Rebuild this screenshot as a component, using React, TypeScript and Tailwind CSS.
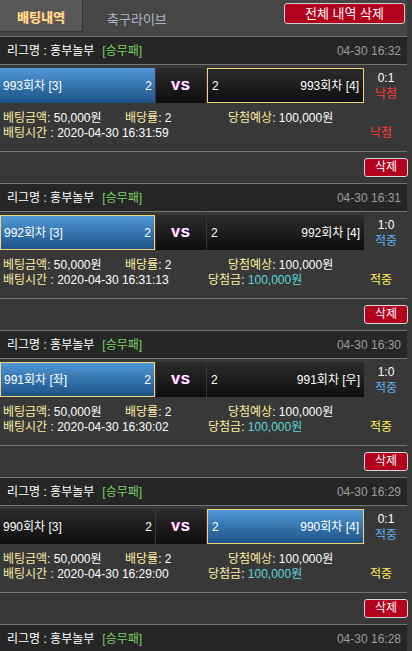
const bets = [
  {
    home: "993회차 [3]",
    away: "993회차 [4]",
    homeBlue: true,
    pick: "away",
    score: "0:1",
    win: false,
    time: "04-30 16:32",
    betTime: "2020-04-30 16:31:59",
  },
  {
    home: "992회차 [3]",
    away: "992회차 [4]",
    homeBlue: true,
    pick: "home",
    score: "1:0",
    win: true,
    time: "04-30 16:31",
    betTime: "2020-04-30 16:31:13",
  },
  {
    home: "991회차 [좌]",
    away: "991회차 [우]",
    homeBlue: true,
    pick: "home",
    score: "1:0",
    win: true,
    time: "04-30 16:30",
    betTime: "2020-04-30 16:30:02",
  },
  {
    home: "990회차 [3]",
    away: "990회차 [4]",
    homeBlue: false,
    pick: "away",
    score: "0:1",
    win: true,
    time: "04-30 16:29",
    betTime: "2020-04-30 16:29:00",
  },
];

const blueBox = "bg-gradient-to-b from-[#5098d8] to-[#1c5386]";
const darkBox = "bg-gradient-to-b from-[#2c2c2c] to-[#0e0e0e]";

type Bet = (typeof bets)[number];

const LeagueRow = ({ time }: { time: string }) => (
  <div className="flex h-[28px] items-center justify-between border-t border-[#747474] bg-[#262626] pl-[7px] pr-[6px]">
    <div className="flex items-center">
      <span className="text-white">리그명 : 홍부놀부</span>
      <span className="ml-[8px] text-[#79d066]">[승무패]</span>
    </div>
    <span className="text-[#9c9c9c]">{time}</span>
  </div>
);

const BetCard = ({ bet }: { bet: Bet }) => {
  const leftSel = bet.pick === "home";
  const rightSel = bet.pick === "away";
  return (
    <div>
      <LeagueRow time={bet.time} />
      <div className="border-t border-[#747474] pt-[3px]">
        <div className="flex h-[35px] gap-px">
          <div
            className={`flex w-[155px] items-center justify-between pl-[3px] pr-[3px] text-white ${
              bet.homeBlue ? blueBox : darkBox
            } ${leftSel ? "border border-[#f3d27c]" : ""}`}
          >
            <span>{bet.home}</span>
            <span>2</span>
          </div>
          <div className={`flex w-[50px] items-center justify-center ${darkBox}`}>
            <span className="text-[13px] font-black tracking-[1px] text-white [font-family:'Liberation_Sans',sans-serif] [text-shadow:-1px_0_#e0202a,1px_0_#2a3cff]">
              VS
            </span>
          </div>
          <div
            className={`flex w-[157px] items-center justify-between px-[4px] text-white ${
              bet.homeBlue ? darkBox : blueBox
            } ${rightSel ? "border border-[#f3d27c]" : ""}`}
          >
            <span>2</span>
            <span>{bet.away}</span>
          </div>
          <div className="flex w-[42px] flex-col items-center justify-center leading-[16px]">
            <span className="text-white">{bet.score}</span>
            <span className={bet.win ? "text-[#5eaef2]" : "text-[#ff3b3b]"}>
              {bet.win ? "적중" : "낙첨"}
            </span>
          </div>
        </div>
      </div>
      <div className="h-[48px] pt-[8px] leading-[15px]">
        <div className="flex pl-[3px]">
          <span className="w-[122px]">
            <span className="text-[#fbeea4]">베팅금액</span>
            <span className="text-white">: 50,000원</span>
          </span>
          <span className="w-[103px]">
            <span className="text-[#fbeea4]">배당률</span>
            <span className="text-white">: 2</span>
          </span>
          <span>
            <span className="text-[#fbeea4]">당첨예상</span>
            <span className="text-white">: 100,000원</span>
          </span>
        </div>
        <div className="flex pl-[3px]">
          <span className="w-[205px]">
            <span className="text-[#fbeea4]">배팅시간</span>
            <span className="text-white"> : {bet.betTime}</span>
          </span>
          <span className="w-[162px]">
            {bet.win && (
              <>
                <span className="text-[#fbeea4]">당첨금</span>
                <span className="text-white">: </span>
                <span className="text-[#5fd6d8]">100,000원</span>
              </>
            )}
          </span>
          <span className={bet.win ? "text-[#fff05a]" : "text-[#ff3b3b]"}>
            {bet.win ? "적중" : "낙첨"}
          </span>
        </div>
      </div>
      <div className="flex h-[32px] justify-end border-t border-[#747474] pr-[0px] pt-[6px]">
        <button className="-mr-px h-[19px] w-[44px] rounded-[3px] border border-[#d8d8d8] bg-[#b3001d] leading-[17px] text-white">
          삭제
        </button>
      </div>
    </div>
  );
};

export default function App() {
  return (
    <div className="h-[651px] w-[412px] overflow-hidden bg-[#383838] text-[12px] [font-family:'Liberation_Sans','Noto_Sans_CJK_KR',sans-serif]">
      <div className="w-[407px]">
        <div className="flex h-[36px] items-start justify-between bg-[#464646]">
          <div className="flex items-start">
            <div className="flex h-[32px] w-[83px] items-center justify-center border-r border-b border-[#363636] bg-[#575757] pt-[4px]">
              <span className="text-[13px] font-bold text-[#ffe97c] [text-shadow:1px_0_#c0508a]">
                배팅내역
              </span>
            </div>
            <div className="flex h-[32px] items-center pl-[24px] pt-[8px] text-[13px] text-[#aab4c6]">
              축구라이브
            </div>
          </div>
          <button className="mr-[2px] mt-[3px] h-[21px] w-[121px] rounded-[3px] border border-[#d0d0d0] bg-[#b3001d] text-[13px] leading-[19px] text-white">
            전체 내역 삭제
          </button>
        </div>
        {bets.map((b) => (
          <BetCard key={b.time} bet={b} />
        ))}
        <LeagueRow time="04-30 16:28" />
      </div>
    </div>
  );
}
